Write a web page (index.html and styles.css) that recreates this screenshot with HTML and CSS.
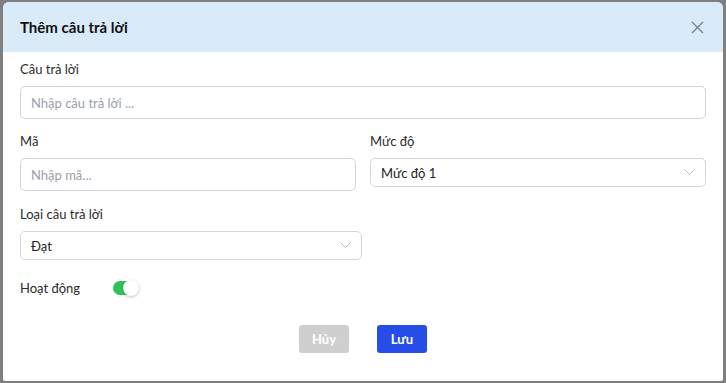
FILE: index.html
```html
<!DOCTYPE html>
<html lang="vi">
<head>
  <meta charset="UTF-8">
  <meta name="viewport" content="width=device-width, initial-scale=1.0">
  <title>Thêm câu trả lời</title>
  <link rel="stylesheet" href="styles.css">
</head>
<body>
  <div class="modal">
    <div class="modal-header">
      <h2 class="modal-title">Thêm câu trả lời</h2>
      <button class="close-btn" aria-label="Đóng">
        <svg width="13" height="13" viewBox="0 0 13 13"><path d="M1 1L12 12M12 1L1 12" stroke="#7a7f87" stroke-width="1.3" fill="none"/></svg>
      </button>
    </div>
    <div class="modal-body">
      <div class="field">
        <label class="label">Câu trả lời</label>
        <input class="input" type="text" placeholder="Nhập câu trả lời ...">
      </div>
      <div class="row">
        <div class="field">
          <label class="label">Mã</label>
          <input class="input" type="text" placeholder="Nhập mã...">
        </div>
        <div class="field">
          <label class="label">Mức độ</label>
          <div class="select">
            <span>Mức độ 1</span>
            <svg width="11" height="7" viewBox="0 0 11 7"><path d="M0.5 0.5L5.5 5.5L10.5 0.5" stroke="#b8bcc3" fill="none"/></svg>
          </div>
        </div>
      </div>
      <div class="field field-narrow">
        <label class="label">Loại câu trả lời</label>
        <div class="select">
          <span>Đạt</span>
          <svg width="11" height="7" viewBox="0 0 11 7"><path d="M0.5 0.5L5.5 5.5L10.5 0.5" stroke="#b8bcc3" fill="none"/></svg>
        </div>
      </div>
      <div class="switch-row">
        <span class="label">Hoạt động</span>
        <span class="switch"><span class="knob"></span></span>
      </div>
      <div class="actions">
        <button class="btn btn-cancel">Hủy</button>
        <button class="btn btn-save">Lưu</button>
      </div>
    </div>
  </div>
</body>
</html>
```

FILE: styles.css
```css
body {
  margin: 0;
  height: 383px;
  background-color: #7f7f7f;
  font-family: "Lato", "Inter", sans-serif;
  color: #222;
  overflow: hidden;
}

.modal {
  margin: 2px 3px;
  width: 720px;
  height: 379px;
  background: #fff;
  border-radius: 6px 6px 2px 2px;
  overflow: hidden;
}

.modal-header {
  height: 50px;
  background: #d9eaf8;
  display: flex;
  align-items: center;
  justify-content: space-between;
  padding: 0 19px 0 17px;
}

.modal-title {
  margin: 0;
  font-size: 15px;
  font-weight: 700;
  color: #111;
}

.close-btn {
  border: none;
  background: none;
  padding: 0;
  display: flex;
}

.modal-body {
  padding: 9px 17px 0 17px;
}

.label {
  display: block;
  font-size: 13px;
  color: #2b2b2b;
  margin-bottom: 9px;
}

.field {
  margin-bottom: 14px;
}

.row {
  display: grid;
  grid-template-columns: 336px 336px;
  column-gap: 14px;
  margin-bottom: 1px;
}

.input {
  box-sizing: border-box;
  width: 100%;
  height: 33px;
  border: 1px solid #d3d7dd;
  border-radius: 5px;
  padding: 0 10px;
  font-family: inherit;
  font-size: 13px;
}

.input::placeholder {
  color: #9aa1ab;
}

.select {
  box-sizing: border-box;
  height: 29px;
  border: 1px solid #d3d7dd;
  border-radius: 5px;
  padding: 0 10px;
  display: flex;
  align-items: center;
  justify-content: space-between;
  font-size: 13px;
  color: #222;
}

.field-narrow {
  width: 342px;
}

.switch-row {
  display: flex;
  align-items: center;
  margin-top: 20px;
}

.switch-row .label {
  margin: 0;
  width: 93px;
}

.switch {
  position: relative;
  width: 24px;
  height: 14px;
  background: #2dc25a;
  border-radius: 7px;
}

.knob {
  position: absolute;
  right: -2px;
  top: -1px;
  width: 16px;
  height: 16px;
  border-radius: 50%;
  background: #fff;
  box-shadow: 0 1px 3px rgba(0, 0, 0, 0.25);
}

.actions {
  display: flex;
  justify-content: center;
  gap: 28px;
  margin-top: 29px;
}

.btn {
  width: 50px;
  height: 28px;
  border: none;
  border-radius: 3px;
  font-family: inherit;
  font-size: 13px;
  font-weight: 700;
  color: #fff;
}

.btn-cancel {
  background: #cfcfcf;
}

.btn-save {
  background: #274de8;
}
```
